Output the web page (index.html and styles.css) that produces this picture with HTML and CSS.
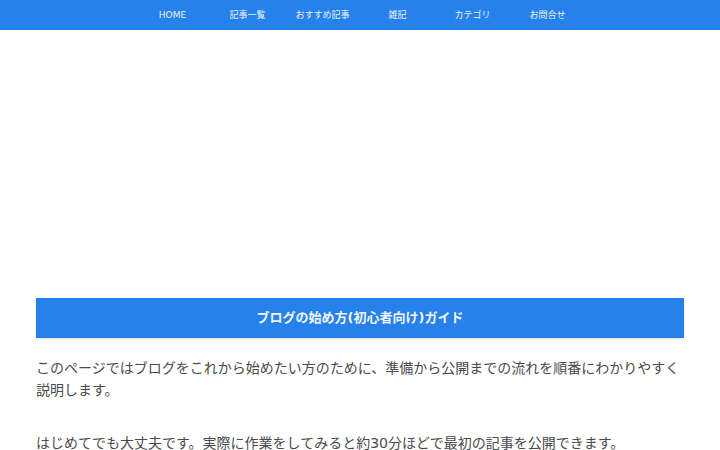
FILE: index.html
```html
<!DOCTYPE html>
<html lang="ja">
<head>
    <meta charset="UTF-8">
    <meta name="viewport" content="width=device-width, initial-scale=1.0">
    <title>ブログの始め方</title>
    <link rel="stylesheet" href="styles.css">
</head>
<body>
    <nav class="global-nav">
        <ul class="nav-list">
            <li><a href="#">HOME</a></li>
            <li><a href="#">記事一覧</a></li>
            <li><a href="#">おすすめ記事</a></li>
            <li><a href="#">雑記</a></li>
            <li><a href="#">カテゴリ</a></li>
            <li><a href="#">お問合せ</a></li>
        </ul>
    </nav>

    <div class="top-space"></div>

    <main class="content">
        <h1 class="entry-title">ブログの始め方(初心者向け)ガイド</h1>
        <p class="entry-text">このページではブログをこれから始めたい方のために、準備から公開までの流れを順番にわかりやすく説明します。</p>
        <p class="entry-text">はじめてでも大丈夫です。実際に作業をしてみると約30分ほどで最初の記事を公開できます。</p>
    </main>
</body>
</html>
```

FILE: styles.css
```css
body {
    margin: 0;
    font-family: "DejaVu Sans", "Noto Sans CJK JP", sans-serif;
    color: #4a4a4a;
    background: #fff;
}

.global-nav {
    height: 30px;
    background-color: #2681ea;
}

.nav-list {
    display: flex;
    justify-content: center;
    margin: 0;
    padding: 0;
    list-style: none;
}

.nav-list li {
    width: 75px;
    text-align: center;
}

.nav-list a {
    display: block;
    line-height: 30px;
    font-size: 9px;
    color: #eaf2ff;
    text-decoration: none;
}

.top-space {
    height: 268px;
}

.content {
    margin: 0 36px;
}

.entry-title {
    margin: 0 0 19px;
    padding: 0 10px;
    height: 40px;
    line-height: 40px;
    text-align: center;
    font-size: 13px;
    font-weight: bold;
    color: #f2f7ff;
    background-color: #2681ea;
    box-shadow: 0 1px 2px rgba(0, 0, 0, 0.15);
}

.entry-text {
    margin: 0 0 31px;
    font-size: 14px;
    line-height: 22px;
}
```
